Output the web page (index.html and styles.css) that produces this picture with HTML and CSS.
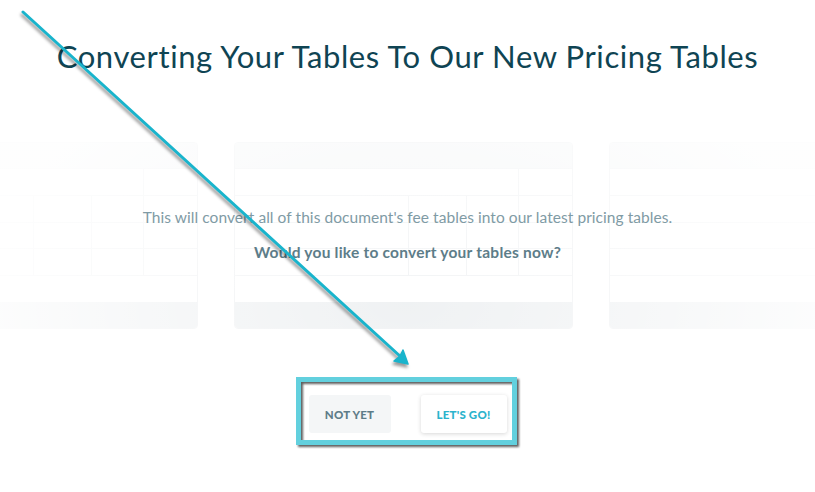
FILE: index.html
```html
<!DOCTYPE html>
<html>
<head>
<meta charset="utf-8">
<link rel="stylesheet" href="styles.css">
</head>
<body>
<main class="page">
  <h1 class="title">Converting Your Tables To Our New Pricing Tables</h1>

  <section class="stage">
    <div class="cards">
      <div class="card">
        <div class="cell head"></div>
        <div class="cell r1 span3 vr"></div><div class="cell r1"></div>
        <div class="cell row vr"></div><div class="cell row vr"></div><div class="cell row vr"></div><div class="cell row"></div>
        <div class="cell row vr"></div><div class="cell row vr"></div><div class="cell row vr"></div><div class="cell row"></div>
        <div class="cell row vr"></div><div class="cell row vr"></div><div class="cell row vr"></div><div class="cell row"></div>
        <div class="cell blank"></div>
        <div class="cell foot"></div>
      </div>
      <div class="card">
        <div class="cell head"></div>
        <div class="cell r1 span3 vr"></div><div class="cell r1"></div>
        <div class="cell row vr"></div><div class="cell row vr"></div><div class="cell row vr"></div><div class="cell row"></div>
        <div class="cell row vr"></div><div class="cell row vr"></div><div class="cell row vr"></div><div class="cell row"></div>
        <div class="cell row vr"></div><div class="cell row vr"></div><div class="cell row vr"></div><div class="cell row"></div>
        <div class="cell blank"></div>
        <div class="cell foot"></div>
      </div>
      <div class="card">
        <div class="cell head"></div>
        <div class="cell r1 span4"></div>
        <div class="cell r1 span4"></div>
        <div class="cell r1 span4"></div>
        <div class="cell r1 span4"></div>
        <div class="cell blank"></div>
        <div class="cell foot"></div>
      </div>
    </div>
    <div class="fade"></div>
    <div class="message">
      <p class="lead">This will convert all of this document's fee tables into our latest pricing tables.</p>
      <p class="ask">Would you like to convert your tables now?</p>
    </div>
  </section>

  <div class="actions">
    <button class="btn btn-secondary">NOT YET</button>
    <button class="btn btn-primary">LET'S GO!</button>
  </div>
</main>

<div class="highlight"></div>

<svg class="arrow" width="815" height="492" viewBox="0 0 815 492">
  <line x1="23" y1="12" x2="401" y2="357" stroke="#19b4cc" stroke-width="3" stroke-linecap="round"/>
  <polygon points="408,364 403,350 400,356 394,361" fill="#19b4cc" stroke="#19b4cc" stroke-width="1.5" stroke-linejoin="round"/>
</svg>
</body>
</html>
```

FILE: styles.css
```css
* { box-sizing: border-box; }

html, body {
  margin: 0;
  padding: 0;
  background: #ffffff;
  overflow: hidden;
}

body {
  width: 815px;
  height: 492px;
  position: relative;
  font-family: "Lato", "Open Sans", sans-serif;
}

.page {
  display: flex;
  flex-direction: column;
  align-items: center;
}

.title {
  margin: 38px 0 0;
  font-size: 31px;
  line-height: 36px;
  font-weight: 400;
  color: #0f4453;
  letter-spacing: 0.6px;
  white-space: nowrap;
}

.stage {
  margin-top: 68px;
  width: 815px;
  height: 187px;
  display: grid;
  grid-template-columns: 815px;
  grid-template-rows: 187px;
  overflow: hidden;
}

.stage > * {
  grid-area: 1 / 1;
  min-width: 0;
}

.cards {
  display: flex;
  gap: 36px;
  margin-left: -141px;
  width: max-content;
}

.card {
  flex: none;
  width: 339px;
  height: 187px;
  border: 1px solid #eceef0;
  border-radius: 4px;
  overflow: hidden;
  background: #ffffff;
  display: grid;
  grid-template-columns: 174px 58px 52px 1fr;
  grid-template-rows: 26px 27px 27px 26px 27px 26px 1fr;
}

.cell { border-color: #eef0f2; border-style: solid; border-width: 0; }
.head { grid-column: 1 / -1; background: #f3f5f6; border-bottom-width: 1px; }
.r1 { border-bottom-width: 1px; }
.row { border-bottom-width: 1px; }
.span3 { grid-column: span 3; }
.span4 { grid-column: 1 / -1; }
.vr { border-right-width: 1px; }
.blank { grid-column: 1 / -1; }
.foot { grid-column: 1 / -1; background: #eaedef; }

.fade {
  background: radial-gradient(ellipse 430px 260px at 50% 85%, rgba(255,255,255,0.25) 0%, rgba(255,255,255,0.62) 60%, rgba(255,255,255,0.9) 100%);
}

.message {
  display: flex;
  flex-direction: column;
  align-items: center;
  padding-top: 65px;
}

.lead {
  margin: 0;
  font-size: 15.5px;
  line-height: 20px;
  letter-spacing: 0.06px;
  color: #7f9ba5;
  white-space: nowrap;
}

.ask {
  margin: 15px 0 0;
  font-size: 15.5px;
  line-height: 20px;
  font-weight: 700;
  letter-spacing: 0.23px;
  color: #5d7d89;
  white-space: nowrap;
}

.actions {
  margin-top: 66px;
  display: flex;
  gap: 30px;
}

.btn {
  height: 38px;
  border: 0;
  border-radius: 3px;
  font-family: "Lato", "Open Sans", sans-serif;
  font-size: 11.5px;
  font-weight: 900;
  letter-spacing: 0.2px;
  padding: 0;
  cursor: pointer;
}

.btn-secondary {
  width: 82px;
  background: #f4f6f7;
  color: #5e7c88;
}

.btn-primary {
  width: 86px;
  background: #ffffff;
  color: #2bb3cc;
  box-shadow: 0 1px 4px rgba(0, 0, 0, 0.16);
}

.highlight {
  position: absolute;
  left: 296px;
  top: 377px;
  width: 221px;
  height: 68px;
  border: 5px solid #62d0de;
  filter: drop-shadow(2px 2px 1px rgba(40, 40, 40, 0.75));
  pointer-events: none;
}

.arrow {
  position: absolute;
  left: 0;
  top: 0;
  pointer-events: none;
  filter: drop-shadow(-1px 3px 1.5px rgba(0, 0, 0, 0.4));
}
```
